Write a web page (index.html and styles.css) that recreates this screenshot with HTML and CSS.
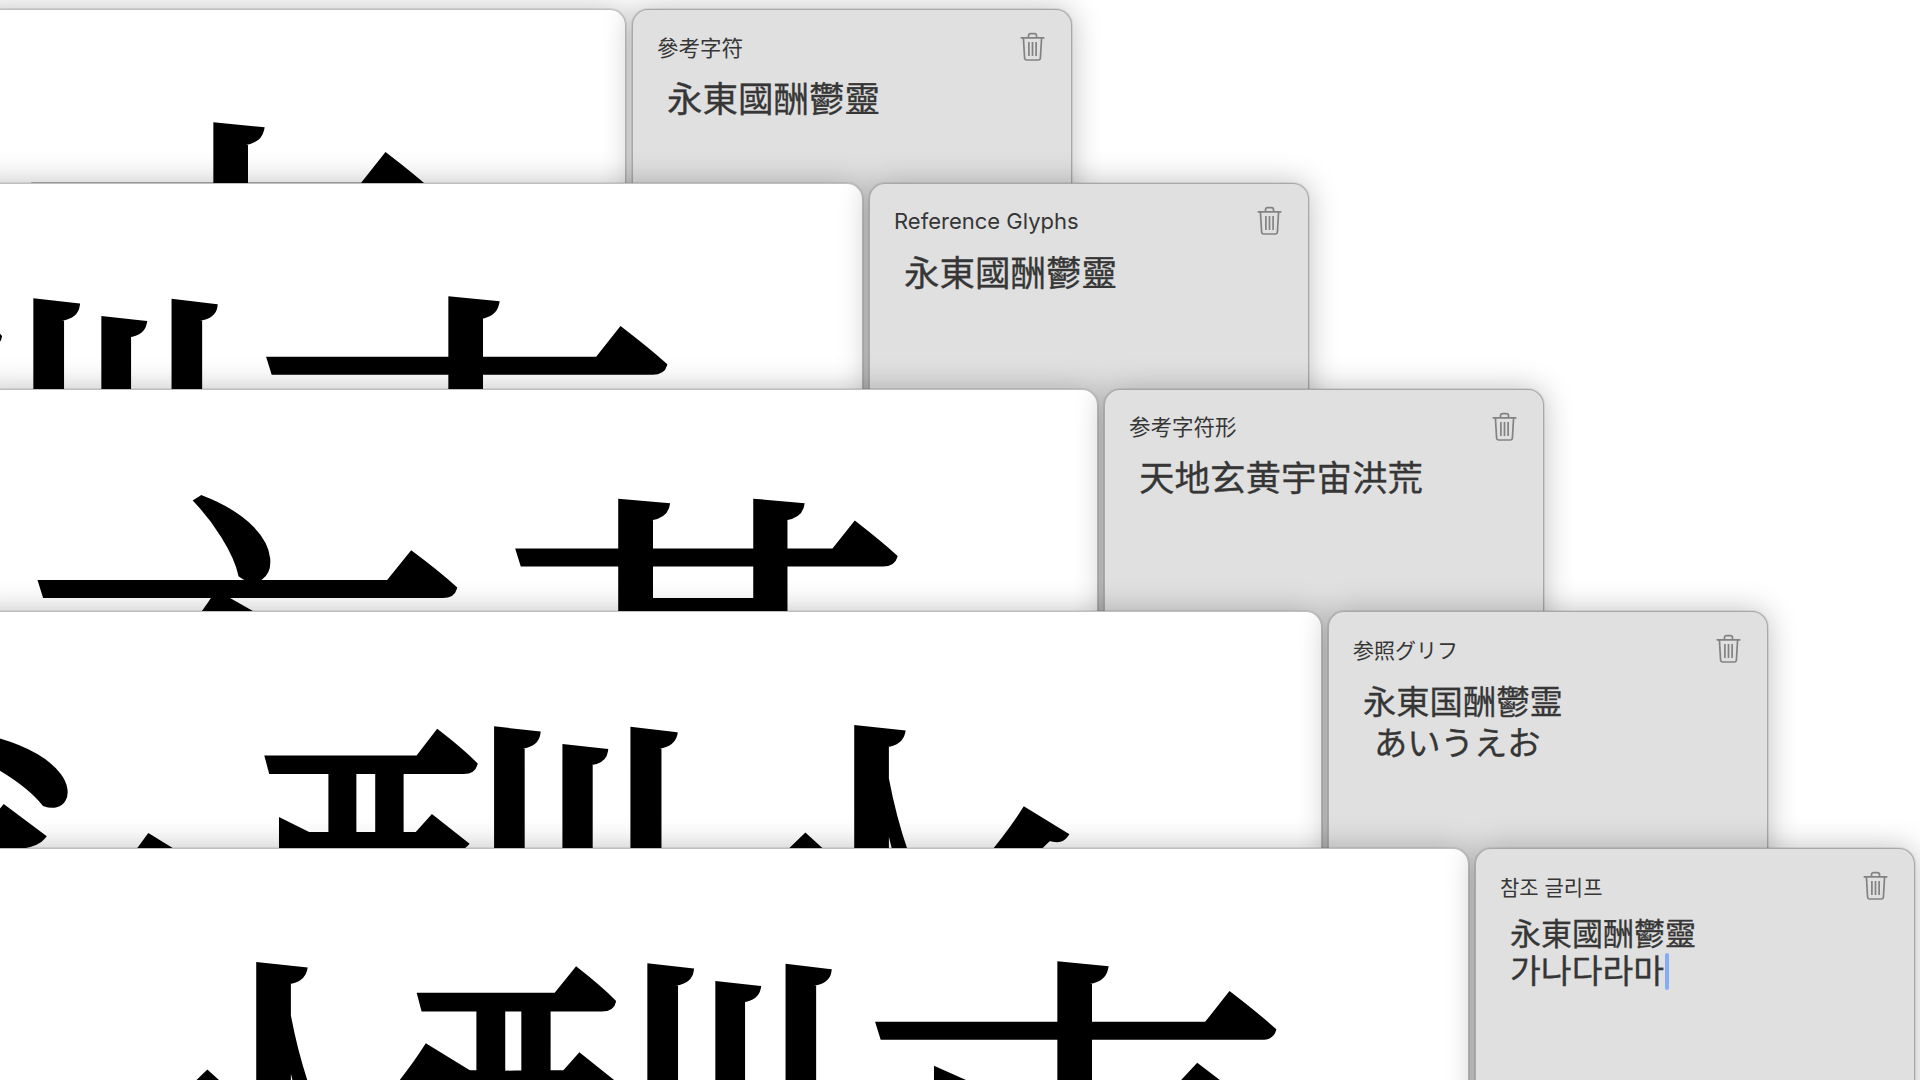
FILE: index.html
```html
<!DOCTYPE html>
<html lang="zh">
<head>
<meta charset="utf-8">
<title>Reference Glyphs</title>
<link rel="stylesheet" href="styles.css">
</head>
<body>
<svg class="defs" aria-hidden="true"><symbol id="trash" viewBox="0 0 25 29"><path d="M8.5 5.4V3.6a2 2 0 0 1 2-2h4a2 2 0 0 1 2 2v1.8M.6 5.8h23.8M3.4 5.8l1.2 20.2a2.2 2.2 0 0 0 2.2 2h11.4a2.2 2.2 0 0 0 2.2-2l1.2-20.2M8.9 10v14M12.5 10v14M16.1 10v14"/></symbol></svg>
<main class="desktop">
  <section class="window win1" lang="zh-Hant">
    <div class="sheet"><p class="glyphs">東</p></div>
    <aside class="panel">
      <header class="panel-head"><span class="label">參考字符</span><svg class="trash"><use href="#trash"/></svg></header>
      <p class="sample">永東國酬鬱靈</p>
    </aside>
  </section>
  <section class="window win2" lang="en">
    <div class="sheet"><p class="glyphs" lang="zh-Hant">酬<span class="tail">東</span></p></div>
    <aside class="panel">
      <header class="panel-head"><span class="label">Reference Glyphs</span><svg class="trash"><use href="#trash"/></svg></header>
      <p class="sample" lang="zh-Hant">永東國酬鬱靈</p>
    </aside>
  </section>
  <section class="window win3" lang="zh-Hans">
    <div class="sheet"><p class="glyphs">玄<span class="trad">黃</span></p></div>
    <aside class="panel">
      <header class="panel-head"><span class="label">参考字符形</span><svg class="trash"><use href="#trash"/></svg></header>
      <p class="sample">天地玄黄宇宙洪荒</p>
    </aside>
  </section>
  <section class="window win4" lang="ja">
    <div class="sheet"><p class="glyphs"><span class="lead">永</span>酬<span class="tail">水</span></p></div>
    <aside class="panel">
      <header class="panel-head"><span class="label">参照グリフ</span><svg class="trash"><use href="#trash"/></svg></header>
      <p class="sample">永東国酬鬱霊<br><span class="indent">あいうえお</span></p>
    </aside>
  </section>
  <section class="window win5" lang="ko">
    <div class="sheet"><p class="glyphs" lang="zh-Hant"><span class="lead">水</span>酬東</p></div>
    <aside class="panel">
      <header class="panel-head"><span class="label">참조 글리프</span><svg class="trash"><use href="#trash"/></svg></header>
      <p class="sample"><span lang="zh-Hant">永東國酬鬱靈</span><br><span class="hangul">가나다라마</span><span class="caret"></span></p>
    </aside>
  </section>
</main>
</body>
</html>
```

FILE: styles.css
```css
html, body {
  margin: 0;
  height: 100%;
  background: #fff;
  overflow: hidden;
}
.defs { display: none; }
.desktop {
  position: relative;
  width: 1920px;
  height: 1080px;
  overflow: hidden;
  font-family: Inter, "Noto Sans CJK SC", sans-serif;
  color: #363636;
}
.window {
  position: absolute;
  left: -30px;
  height: 760px;
  display: flex;
  gap: 6px;
}
.win1 { top: 9px;   width: 1102px; }
.win2 { top: 183px; width: 1339px; }
.win3 { top: 389px; width: 1574px; }
.win4 { top: 611px; width: 1798px; }
.win5 { top: 848px; width: 1945px; }

.sheet, .panel {
  border-radius: 16px;
  box-shadow: inset 0 0 0 1px rgba(0,0,0,.25), 0 0 0 1px rgba(0,0,0,.08), 0 0 30px rgba(0,0,0,.26);
}
.sheet {
  flex: 1;
  min-width: 0;
  background: #fff;
  overflow: hidden;
}
.glyphs {
  margin: 0;
  font-family: "Noto Serif CJK TC", "Noto Sans CJK TC", serif;
  font-weight: 400;
  font-size: 450px;
  line-height: 1;
  color: #000;
  white-space: nowrap;
  -webkit-text-stroke: 5px #000;
}
.win3 .glyphs { font-family: "Noto Serif CJK SC", "Noto Sans CJK SC", serif; }
.win4 .glyphs { font-family: "Noto Serif CJK JP", "Noto Sans CJK JP", serif; }
.trad { font-family: "Noto Serif CJK TC", serif; margin-left: 7px; }
.win1 .glyphs { margin: 74px 0 0 37px; }
.win2 .glyphs { margin: 74px 0 0 -183px; }
.win2 .tail { margin-left: 5px; }
.win3 .glyphs { margin: 71px 0 0 52px; }
.win4 .glyphs { margin: 74px 0 0 -190px; }
.win4 .lead { margin-right: 15px; }
.win4 .tail { margin-left: -48px; }
.win5 .glyphs { margin: 74px 0 0 79px; }
.win5 .lead { margin-right: -98px; }

.panel {
  flex: none;
  box-sizing: border-box;
  width: 440px;
  padding: 22px 27px 0 25px;
  background: #e0e0e0;
}
.panel-head {
  display: flex;
  justify-content: space-between;
  align-items: center;
  height: 29px;
  margin-top: 1px;
}
.label { font-size: 21.5px; line-height: 28px; }
.win2 .label { font-size: 22px; }
.win4 .label, .win5 .label { font-size: 21px; }
.trash {
  width: 25px;
  height: 29px;
  fill: none;
  stroke: #828282;
  stroke-width: 1.7;
}
.sample {
  margin: 15px 0 0 10px;
  font-size: 35.5px;
  line-height: 41px;
  white-space: nowrap;
  -webkit-text-stroke: .3px #363636;
}
.win3 .sample { margin-top: 17px; }
.win4 .sample { font-size: 33.3px; font-family: "Noto Sans CJK JP", sans-serif; margin-top: 16px; }
.win5 .sample { font-size: 31px; line-height: 37px; margin-top: 13px; font-family: "Noto Sans CJK KR", sans-serif; }
.win1 .sample, .win2 .sample { font-family: "Noto Sans CJK TC", sans-serif; }
.win1 .label { font-family: "Noto Sans CJK TC", sans-serif; }
.win4 .label { font-family: "Noto Sans CJK JP", sans-serif; }
.win5 .label { font-family: "Noto Sans CJK KR", sans-serif; }
.indent { margin-left: 11px; }
.hangul { font-size: 33.5px; }
.caret {
  display: inline-block;
  width: 4px;
  height: 37px;
  margin-left: 1px;
  vertical-align: -7px;
  border-radius: 2px;
  background: #86acf5;
}
```
